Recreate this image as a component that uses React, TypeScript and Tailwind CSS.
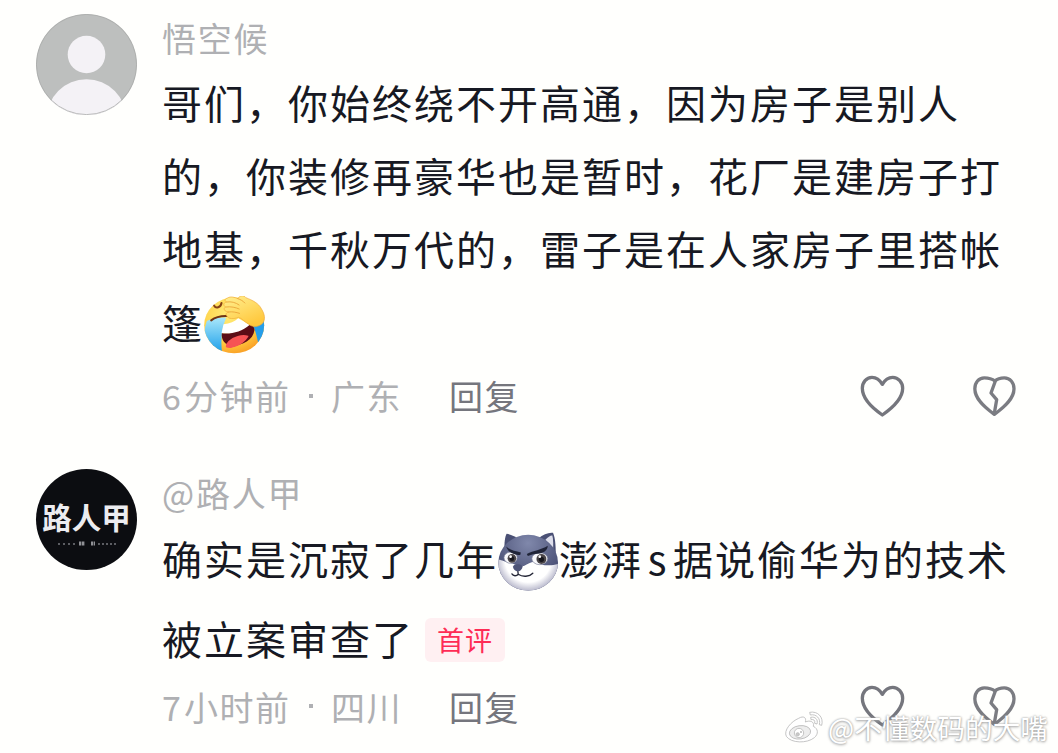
import { FC, ReactNode } from "react"

interface CommentProps {
  avatar: ReactNode
  name: string
  count: string
  time: string
  place: string
  metaClass: string
  children: ReactNode
}

const DefaultAvatar: FC = () => (
  <svg className="size-[101px] shrink-0 rounded-full" viewBox="0 0 101 101" aria-hidden="true">
    <rect width="101" height="101" fill="#bdbfbe" />
    <circle cx="50.5" cy="40.5" r="18.8" fill="#f4f2f6" />
    <circle cx="50.5" cy="105.3" r="40" fill="#f4f2f6" />
    <circle cx="50.5" cy="50.5" r="50.1" fill="none" stroke="#a9abaa" strokeWidth="0.8" />
  </svg>
)

const NameAvatar: FC = () => (
  <div className="flex size-[101px] shrink-0 flex-col items-center rounded-full bg-[#0c0d11] pt-[30px] text-[#ececf0]">
    <span className="text-[29.5px] leading-[34px] font-bold whitespace-nowrap">路人甲</span>
    <svg className="mt-[7px] h-[7px] w-[62px]" viewBox="0 0 62 7" aria-hidden="true">
      <path d="M2 4h2M7 4h2M12 4h2M17 4h2M42 4h2M46 4h2M50 4h2M54 4h2M58 4h2" stroke="#5c5d62" strokeWidth="2" />
      <path d="M23 3.5h6M35 3.5h4" stroke="#8f9095" strokeWidth="4" strokeDasharray="2.4 .6" />
    </svg>
  </div>
)

const Heart: FC = () => (
  <svg className="h-[46px] w-[50px]" viewBox="0 0 150 138" fill="none" stroke="#75767d" strokeWidth="10" strokeLinejoin="round">
    <path d="M73 34C65 20 54 13 42 13C25 13 13 28 13 46C13 79 44 106 73 126C102 106 134 79 134 46C134 28 121 13 104 13C92 13 81 20 73 34Z" />
  </svg>
)

const BrokenHeart: FC = () => (
  <svg className="h-[46px] w-[50px]" viewBox="0 0 150 138" fill="none" stroke="#7b7c82" strokeWidth="10" strokeLinejoin="round" strokeLinecap="round">
    <path d="M75 24C66 17 55 14.500 43 14.500C26 14.500 14.500 29 14.500 47C14.500 78 44 103 73 124C102 103 132 78 132 47C132 29 120 14.500 103 14.500C91 14.500 82 17 75 24Z" />
    <path d="M75 27L63 60L80 80L73 121" />
  </svg>
)

const FacepalmEmoji: FC = () => (
  <svg className="h-[58px] w-[61px] shrink-0" viewBox="162 49 182 174" aria-label="笑哭捂脸">
    <defs>
      <radialGradient id="face" cx="0.4" cy="0.3" r="0.75">
        <stop offset="0" stopColor="#ffec79" />
        <stop offset="0.65" stopColor="#ffd044" />
        <stop offset="1" stopColor="#f99b22" />
      </radialGradient>
      <linearGradient id="tear" x1="0" y1="0" x2="0" y2="1">
        <stop offset="0" stopColor="#a9e7fa" />
        <stop offset="1" stopColor="#189de9" />
      </linearGradient>
      <linearGradient id="hand" x1="0" y1="0" x2="0.6" y2="1">
        <stop offset="0" stopColor="#fff092" />
        <stop offset="1" stopColor="#ffc83d" />
      </linearGradient>
      <clipPath id="head">
        <ellipse cx="252" cy="137" rx="90" ry="84" />
      </clipPath>
      <clipPath id="mouth">
        <path d="M215 161C245 164 275 156 298 136C308 137 313 143 313 151C309 181 278 198 245 198C224 197 213 181 215 161Z" />
      </clipPath>
    </defs>
    <ellipse cx="252" cy="137" rx="90" ry="84" fill="url(#face)" />
    <g clipPath="url(#head)">
      <path d="M170 124C184 117 208 113 228 114C214 146 211 184 216 222H185C158 198 158 158 170 124Z" fill="url(#tear)" />
      <path d="M307 136L344 123V161C339 177 333 186 324 190C320 170 316 151 307 136Z" fill="#259eea" />
    </g>
    <path d="M192 78C197 87 212 84 214 70" fill="none" stroke="#874116" strokeWidth="6" strokeLinecap="round" />
    <path d="M183 122C196 112 212 108 232 109" fill="none" stroke="#703415" strokeWidth="6" strokeLinecap="round" />
    <path d="M220 134C239 132 254 126 264 116L300 136C279 158 242 166 214 161Z" fill="#fff" />
    <path d="M215 161C245 164 275 156 298 136C308 137 313 143 313 151C309 181 278 198 245 198C224 197 213 181 215 161Z" fill="#5b0d16" />
    <ellipse cx="269" cy="193" rx="43" ry="25" fill="#f65354" transform="rotate(-15 269 193)" clipPath="url(#mouth)" />
    <path
      d="M232 55C242 49 253 53 263 57C269 46 282 46 287 54C307 62 325 70 334 88C344 104 346 119 338 130C327 142 308 144 296 134C283 127 276 116 265 113C251 119 234 118 230 109C225 104 228 99 235 97C222 96 218 86 226 82C218 77 220 69 229 67C222 62 224 58 232 55Z"
      fill="url(#hand)"
      stroke="#f0a936"
      strokeWidth="2"
    />
    <path d="M230 67C243 65 256 68 267 76M227 82C243 80 256 83 267 88M235 97C247 95 258 98 268 101M263 57C272 60 279 64 284 70" fill="none" stroke="#e8a034" strokeWidth="2.500" strokeLinecap="round" />
  </svg>
)

const HuskyEmoji: FC = () => (
  <svg className="h-[59px] w-[61px] shrink-0" viewBox="52 37 184 177" aria-label="哈士奇">
    <defs>
      <radialGradient id="fur" cx="0.5" cy="0.15" r="0.7">
        <stop offset="0" stopColor="#8088ab" />
        <stop offset="1" stopColor="#454b70" />
      </radialGradient>
      <radialGradient id="muzzle" gradientUnits="userSpaceOnUse" cx="143" cy="118" r="97">
        <stop offset="0.72" stopColor="#ffffff" />
        <stop offset="1" stopColor="#b6b6ca" />
      </radialGradient>
      <clipPath id="skull">
        <ellipse cx="143" cy="129" rx="90" ry="84" />
      </clipPath>
    </defs>
    <path d="M71 91C71 69 73 51 78 42C91 44 106 52 117 60Z" fill="#4a5074" />
    <path d="M174 55C188 44 205 37 218 39C225 55 226 81 226 98Z" fill="#4a5074" />
    <path d="M195 60C203 51 211 46 216 47C219 59 219 76 218 90Z" fill="#dedfeb" />
    <ellipse cx="143" cy="129" rx="90" ry="84" fill="url(#fur)" />
    <g clipPath="url(#skull)">
      <path d="M50 121C62 118 70 128 90 130C98 131 104 136 112 138L130 139C142 133 150 126 162 126C178 136 208 142 236 132V217H50Z" fill="url(#muzzle)" />
    </g>
    <ellipse cx="90" cy="114" rx="20" ry="17" fill="#f9f9fc" stroke="#777b94" strokeWidth="2" />
    <ellipse cx="178" cy="117" rx="24" ry="18" fill="#f9f9fc" stroke="#777b94" strokeWidth="2" />
    <circle cx="94" cy="116" r="13" fill="#494447" />
    <circle cx="183" cy="118" r="15" fill="#494447" />
    <circle cx="94" cy="117" r="7" fill="#18171e" />
    <circle cx="183" cy="119" r="8" fill="#18171e" />
    <circle cx="90" cy="111" r="4" fill="#fff" />
    <circle cx="178" cy="111" r="4" fill="#fff" />
    <path d="M77 80C87 91 104 94 121 98L119 106C100 106 81 97 77 80Z" fill="#202438" />
    <path d="M139 103C159 92 182 91 202 78C202 93 188 101 171 102C160 103 151 105 142 109Z" fill="#202438" />
    <path d="M97 141C101 132 120 132 126 140C126 148 119 155 112 156C104 154 98 149 97 141Z" fill="#4e5477" />
    <path d="M112 156L113 164M94 163C98 170 108 170 113 164C126 173 147 172 157 161" fill="none" stroke="#242637" strokeWidth="4" strokeLinecap="round" />
  </svg>
)

const WeiboLogo: FC = () => (
  <svg className="h-[35px] w-[40px] shrink-0" viewBox="0 0 120 105" fill="#fff" stroke="#b9b9b9" strokeWidth="2.500">
    <path d="M44 28C59 19 68 26 64 39C77 33 92 37 88 52C103 59 104 75 91 86C69 104 21 103 7 82C-2 64 22 37 44 28Z" />
    <ellipse cx="48" cy="70" rx="32" ry="20" transform="rotate(-8 48 70)" fill="#ededed" />
    <circle cx="45" cy="72" r="14" />
    <circle cx="41" cy="76" r="5" fill="#c8c8c8" />
    <circle cx="51" cy="69" r="2" fill="#c8c8c8" />
    <path d="M77 10C101 5 120 25 113 49L106 47C111 29 97 14 79 18Z" />
    <path d="M80 25C94 22 103 32 99 45L92 43C94 34 89 30 81 32Z" />
  </svg>
)

const Comment: FC<CommentProps> = ({ avatar, name, count, time, place, metaClass, children }) => (
  <article className="flex items-start gap-[25px]">
    {avatar}
    <div className="min-w-0 flex-1">
      <h3 className="h-[52px] text-[34px] leading-[48px] tracking-[1.8px] text-[#afb0b3]">{name}</h3>
      {children}
      <div className={metaClass}>
        <div className="flex items-center text-[34px] tracking-[1.5px] text-[#afb0b3]">
          <div className="flex w-[169px] items-center">
            <span className="w-[22px]">{count}</span>
            <span>{time}</span>
            <i className="ml-[18px] size-1 bg-[#afb0b3]" />
          </div>
          <span className="w-[118px]">{place}</span>
          <button className="tracking-[1.5px] text-[#75767d]">回复</button>
        </div>
        <div className="flex gap-[62px]">
          <button aria-label="喜欢"><Heart /></button>
          <button aria-label="不喜欢"><BrokenHeart /></button>
        </div>
      </div>
    </div>
  </article>
)

const App: FC = () => {
  return (
    <main className="relative h-[753px] w-[1058px] overflow-hidden bg-[#fffffd] pt-[14px] pr-[38px] pl-9 font-['Noto_Sans_CJK_SC',sans-serif] whitespace-nowrap">
      <div className="h-[455px]">
        <Comment
          avatar={<DefaultAvatar />}
          name="悟空候"
          count="6"
          time="分钟前"
          place="广东"
          metaClass="flex h-[69px] items-center justify-between"
        >
          <div className="h-[295px] text-[40px] leading-[73px] tracking-[2px] text-[#171923]">
            <p>哥们，你始终绕不开高通，因为房子是别人</p>
            <p>的，你装修再豪华也是暂时，花厂是建房子打</p>
            <p>地基，千秋万代的，雷子是在人家房子里搭帐</p>
            <p className="flex h-[79px] items-center"><span className="pb-1">篷</span><FacepalmEmoji /></p>
          </div>
        </Comment>
      </div>

      <Comment
        avatar={<NameAvatar />}
        name="@路人甲"
        count="7"
        time="小时前"
        place="四川"
        metaClass="flex h-[50px] items-center justify-between"
      >
        <div className="text-[40px] leading-[75px] tracking-[2px] text-[#171923]">
          <p className="flex h-20 items-center">
            <span className="pb-[5px]">确实是沉寂了几年</span>
            <HuskyEmoji />
            <span className="pb-[5px]">澎湃</span>
            <span className="w-[30px] pb-[5px] text-center">s</span>
            <span className="pb-[5px]">据说偷华为的技术</span>
          </p>
          <p className="flex h-20 items-center">
            <span className="pb-[5px]">被立案审查了</span>
            <span className="mb-[3px] ml-[11px] flex h-11 w-20 items-center justify-center rounded-md bg-[#fff0f2] pb-px text-[27px] leading-none tracking-[1px] text-[#fe2c55]">首评</span>
          </p>
        </div>
      </Comment>

      <div className="absolute top-[708px] left-[784px] flex h-9 items-center gap-1 text-[27.7px] text-white [text-shadow:0_0_2px_#999,0_1px_3px_#aaa]">
        <WeiboLogo />
        <span className="pt-[3px]">@不懂数码的大嘴</span>
      </div>
    </main>
  )
}

export default App
